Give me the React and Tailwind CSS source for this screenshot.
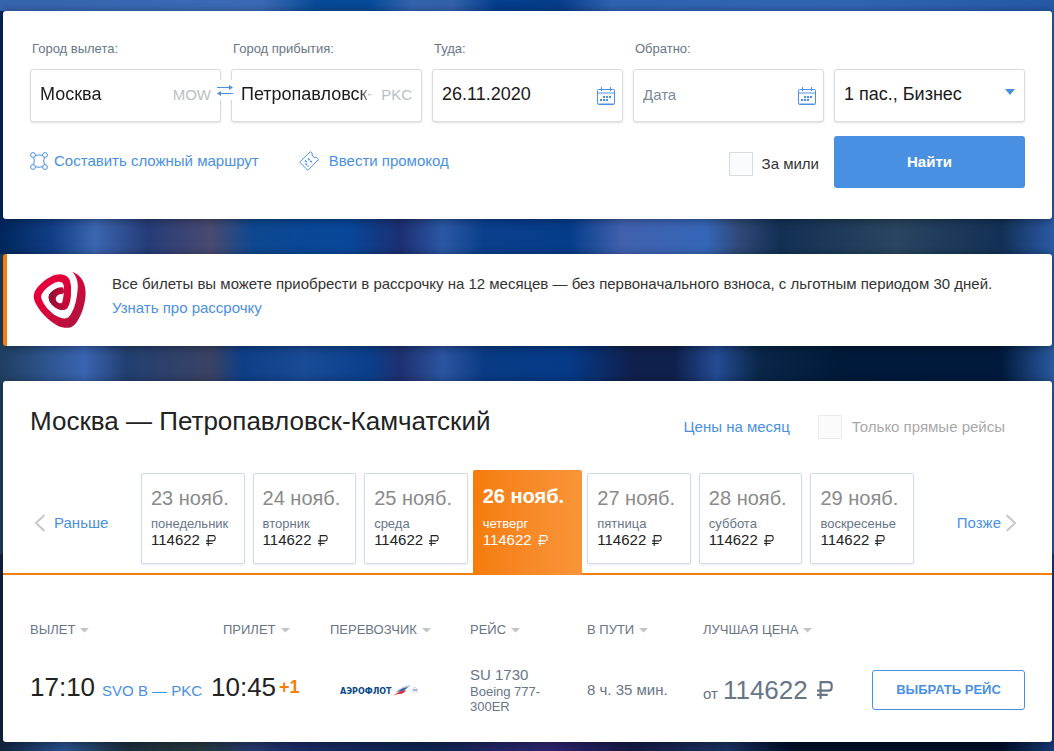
const days = [
  { date: '23 нояб.', day: 'понедельник' },
  { date: '24 нояб.', day: 'вторник' },
  { date: '25 нояб.', day: 'среда' },
  { date: '26 нояб.', day: 'четверг', active: true },
  { date: '27 нояб.', day: 'пятница' },
  { date: '28 нояб.', day: 'суббота' },
  { date: '29 нояб.', day: 'воскресенье' },
]

const columns = [
  { title: 'Вылет', width: 'w-[181px]' },
  { title: 'Прилет', width: 'w-[119px]', pad: 'pl-3' },
  { title: 'Перевозчик', width: 'w-[140px]' },
  { title: 'Рейс', width: 'w-[117px]' },
  { title: 'В пути', width: 'w-[116px]' },
  { title: 'Лучшая цена', width: 'w-[169px]' },
]

const fieldBox = 'flex h-[53px] items-center rounded-[3px] border border-[#d9dcdf] bg-white px-[9px] shadow-[0_1px_2px_rgba(0,0,0,0.12)]'
const fieldInput = 'h-full min-w-0 flex-1 bg-transparent pb-[3px] text-lg text-[#1a1a1a] outline-none placeholder:text-[15px] placeholder:text-[#7d8a99]'
const fieldLabel = 'mb-3 block px-[2px] text-[13px] leading-4 text-[#677587]'
const link = 'text-[15px] text-[#4a90e2]'

function CalendarIcon() {
  return (
    <svg aria-hidden="true" className="h-[18px] w-[18px]" fill="none" viewBox="0 0 18 18">
      <rect height="15" rx="1" stroke="#4a90e2" width="17" x="0.5" y="2.5" />
      <path d="M1 6h16" stroke="#a9cbf2" strokeWidth="2" />
      <path d="M1 16.5h16" stroke="#a9cbf2" />
      <path d="M4.5 0v4M13.5 0v4" stroke="#4a90e2" />
      <path d="M6 10h2M9 10h2M12 10h2M3 13h2M6 13h2M9 13h2" stroke="#4a90e2" strokeWidth="2" />
    </svg>
  )
}

function SwapIcon() {
  return (
    <svg aria-hidden="true" className="h-[11px] w-4" viewBox="0 0 16 11">
      <path d="M0 2.5h13M3 8.5h13" stroke="#4a90e2" />
      <path d="M12 0l4 2.5-4 2.5zM4 6L0 8.5 4 11z" fill="#4a90e2" />
    </svg>
  )
}

function RouteIcon() {
  return (
    <svg aria-hidden="true" className="h-[18px] w-[18px]" fill="none" stroke="#4a90e2" viewBox="0 0 18 18">
      <circle cx="3" cy="3" r="2.4" />
      <circle cx="15" cy="3" r="2.4" />
      <circle cx="3" cy="15" r="2.4" />
      <circle cx="15" cy="15" r="2.4" />
      <path d="M5.2 3.6q3.8-1.6 7.6 0M5.2 14.6q3.8 1.4 7.6 0M3.5 5.3q1.8 3.7 0 7.4M14.5 5.3q-1.8 3.7 0 7.4" />
    </svg>
  )
}

function TicketIcon() {
  return (
    <svg aria-hidden="true" className="h-5 w-5" fill="none" stroke="#4a90e2" strokeLinejoin="round" viewBox="0 0 20 20">
      <path d="M.7 11.2L11.2.7l2 1.5q-.6 2 .8 3.4t3.4.6l2 2.4L8.900 19.300z" />
      <path d="M6 9.500l2 2M9 7.500l4 4M6.500 12.500l3 3" strokeDasharray="2.200 1" strokeWidth="1.500" />
    </svg>
  )
}

function SpiralLogo() {
  return (
    <svg aria-hidden="true" className="h-[58px] w-[54px] shrink-0" fill="none" viewBox="100 64 162 174">
      <defs>
        <linearGradient id="spiral" x1="0" x2="1" y1="0" y2="1">
          <stop offset="0.3" stopColor="#e4003a" />
          <stop offset="1" stopColor="#a8183f" />
        </linearGradient>
        <linearGradient id="core" x1="1" x2="0" y1="0" y2="0">
          <stop offset="0" stopColor="#d4063a" />
          <stop offset="1" stopColor="#8c1234" />
        </linearGradient>
      </defs>
      <path d="M218 66C244 76 258 98 258 132C256 168 244 204 224 226C212 238 192 236 174 228C146 214 114 180 104 152C98 134 108 116 124 102C144 84 164 74 182 74C206 76 213 90 214 112C215 142 212 164 202 176C192 186 174 180 162 170C148 158 142 142 152 130C162 118 178 112 190 114C194 122 196 128 188 132C174 132 164 142 170 154C176 162 186 164 188 156C192 140 194 122 192 106C188 94 174 94 160 102C142 112 126 126 124 142C128 162 150 188 172 200C188 208 204 210 212 196C226 176 232 146 234 118C236 94 230 80 218 66Z" fill="url(#spiral)" />
      <path d="M190 114C178 112 162 118 152 130C142 142 148 158 162 170C174 180 192 186 202 176C206 168 210 158 212 142C204 150 194 164 180 162C168 160 162 146 172 138C178 132 188 134 191 130Z" fill="url(#core)" />
    </svg>
  )
}

function AeroflotLogo() {
  return (
    <svg aria-label="Аэрофлот" className="ml-[10px] h-4 w-20" role="img" viewBox="0 0 80 16">
      <text fill="#0b4a86" fontFamily="DejaVu Sans, sans-serif" fontSize="8" fontWeight="700" x="0" y="12">АЭРОФЛОТ</text>
      <path d="M55 11q6-7 16-8-5 5-9 6z" fill="#b9c3cf" />
      <path d="M57 10q5-4 11-5-3 3-6 4z" fill="#2457a8" />
      <path d="M53 14q6-5 13-6-2 4-7 4-3 0-6 2z" fill="#e0233c" />
      <circle cx="75" cy="8" fill="none" r="2.6" stroke="#a9b6cc" strokeDasharray="1 1" />
      <path d="M73 8h4" stroke="#4b6ea8" />
    </svg>
  )
}

function Ruble({ className, stroke }) {
  return (
    <svg aria-label="₽" className={className} fill="none" role="img" viewBox="0 0 18 20">
      <path d="M4 20V1.200h9q3.500 0 3.500 3.500v2.500q0 3.500-3.500 3.500H0M0 15.500h12" stroke="currentColor" strokeWidth={stroke} />
    </svg>
  )
}

function SortArrow() {
  return (
    <svg aria-hidden="true" className="h-[5px] w-[9px]" viewBox="0 0 9 5">
      <path d="M0 0h9L4.5 4.5z" fill="#c2c4c6" />
    </svg>
  )
}

function Airport({ id, label, value, code, children }) {
  return (
    <div className="relative">
      <label className={fieldLabel} htmlFor={id}>{label}</label>
      <div className={fieldBox}>
        <input className={`${fieldInput} [mask-image:linear-gradient(to_right,#000_90%,transparent)]`} defaultValue={value} id={id} type="text" />
        <span className="pl-2 text-[15px] text-[#b9bec6]">{code}</span>
      </div>
      {children}
    </div>
  )
}

function DateField({ id, label, value }) {
  return (
    <div>
      <label className={fieldLabel} htmlFor={id}>{label}</label>
      <div className={`${fieldBox} pr-[7px]`}>
        <input className={fieldInput} defaultValue={value} id={id} placeholder="Дата" type="text" />
        <button aria-label="Открыть календарь" type="button"><CalendarIcon /></button>
      </div>
    </div>
  )
}

function SearchForm() {
  return (
    <form className="rounded-[3px] bg-white px-[27px] pb-[31px] pt-[30px] shadow-[0_1px_10px_rgba(0,0,0,0.4)]" onSubmit={(e) => e.preventDefault()}>
      <div className="grid grid-cols-5 items-end gap-[10px]">
        <Airport code="MOW" id="from" label="Город вылета:" value="Москва">
          <button aria-label="Поменять города местами" className="absolute -right-3 bottom-[22px] z-10 flex h-5 items-center bg-white" type="button"><SwapIcon /></button>
        </Airport>
        <Airport code="PKC" id="to" label="Город прибытия:" value="Петропавловск-Камчатский" />
        <DateField id="there" label="Туда:" value="26.11.2020" />
        <DateField id="back" label="Обратно:" />
        <div className="relative">
          <select aria-label="Пассажиры и класс" className="block h-[53px] w-full appearance-none rounded-[3px] border border-[#d9dcdf] bg-white px-[9px] pb-[3px] text-lg text-[#1a1a1a] shadow-[0_1px_2px_rgba(0,0,0,0.12)]">
            <option>1 пас., Бизнес</option>
          </select>
          <svg aria-hidden="true" className="pointer-events-none absolute right-[10px] top-5 h-[6px] w-[10px]" viewBox="0 0 10 6"><path d="M0 0h10L5 6z" fill="#4a90e2" /></svg>
        </div>
      </div>
      <div className="mt-[14px] grid grid-cols-5 gap-[10px]">
        <div className="col-span-4 flex items-start">
          <a className={`flex items-center gap-[6px] pt-[14px] ${link}`} href="#route"><RouteIcon />Составить сложный маршрут</a>
          <a className={`ml-10 flex items-center gap-[10px] pt-[14px] ${link}`} href="#promo"><TicketIcon />Ввести промокод</a>
          <label className="ml-auto mr-[5px] mt-4 flex items-center gap-[9px] text-[15px] text-[#333]">
            <input className="h-6 w-6 appearance-none border border-[#d5dbe1] bg-[#f8fcff]" type="checkbox" />
            За мили
          </label>
        </div>
        <button className="h-[52px] rounded-[3px] bg-[#4a90e2] text-[15px] font-bold text-white" type="submit">Найти</button>
      </div>
    </form>
  )
}

function InstallmentBanner() {
  return (
    <section className="flex items-start gap-[25px] rounded-[3px] border-l-4 border-[#f57f0c] bg-white py-[17px] pl-[26px] pr-4 shadow-[0_1px_10px_rgba(0,0,0,0.4)]">
      <SpiralLogo />
      <p className="pt-px text-[15px] leading-6 text-[#333]">
        Все билеты вы можете приобрести в рассрочку на 12 месяцев — без первоначального взноса, с льготным периодом 30 дней.
        <br />
        <a className="text-[#4a90e2]" href="#installment">Узнать про рассрочку</a>
      </p>
    </section>
  )
}

function DayTab({ date, day, active }) {
  const box = active
    ? '-mx-[3px] -mb-[10px] -mt-[3px] rounded-t-[2px] bg-linear-to-r from-[#f57c0a] to-[#f99538] px-[10px] pt-[14px] text-white'
    : 'mb-px rounded-[2px] border border-[#d0dcea] bg-white px-[9px] pt-3 shadow-[0_1px_2px_rgba(0,0,0,0.08)]'
  return (
    <button className={`flex flex-col items-start whitespace-nowrap text-left ${box}`} type="button">
      <span className={active ? 'text-xl leading-6 font-bold' : 'text-xl leading-6 text-[#8a8a8a]'}>{date}</span>
      <span className={active ? 'mt-2 text-[13px] leading-4' : 'mt-[6px] text-[13px] leading-4 text-[#677587]'}>{day}</span>
      <span className={active ? 'flex items-center gap-[6px] text-[15px] leading-4' : 'flex items-center gap-[6px] text-[15px] leading-4 text-[#222]'}>
        114622 <Ruble className="h-[11px] w-[10px]" stroke="2" />
      </span>
    </button>
  )
}

function Results() {
  return (
    <section className="rounded-[3px] bg-white shadow-[0_1px_10px_rgba(0,0,0,0.4)]">
      <div className="flex items-start px-[27px] pt-6">
        <h1 className="text-[26px] leading-8 text-[#222]">Москва — Петропавловск-Камчатский</h1>
        <div className="ml-auto mr-5 mt-[10px] flex items-center">
          <a className={link} href="#month">Цены на месяц</a>
          <label className="ml-7 flex items-center gap-[10px] text-[15px] text-[#a9a9a9]">
            <input className="h-6 w-6 appearance-none border border-[#ebebeb] bg-[#fbfbfb]" disabled type="checkbox" />
            Только прямые рейсы
          </label>
        </div>
      </div>
      <nav aria-label="Даты вылета" className="mt-[34px] flex border-b-2 border-[#f57f0c] px-[27px] pb-2">
        <a className={`flex w-[111px] items-center gap-2 pl-1 pt-2 ${link}`} href="#earlier">
          <svg aria-hidden="true" className="h-[18px] w-3" fill="none" viewBox="0 0 12 18"><path d="M10.5 1L2 9l8.5 8" stroke="#c8c8c8" strokeWidth="2" /></svg>
          Раньше
        </a>
        <div className="grid h-[92px] flex-1 grid-cols-7 gap-2">
          {days.map((item) => <DayTab key={item.date} {...item} />)}
        </div>
        <a className={`flex w-[111px] items-center justify-end gap-1 pr-2 pt-2 ${link}`} href="#later">
          Позже
          <svg aria-hidden="true" className="h-[18px] w-3" fill="none" viewBox="0 0 12 18"><path d="M1.5 1L10 9l-8.5 8" stroke="#c8c8c8" strokeWidth="2" /></svg>
        </a>
      </nav>
      <div className="px-[27px] pb-[2px] pt-[45px]">
        <table className="w-full table-fixed text-left text-[#677587]">
          <thead>
            <tr>
              {columns.map(({ title, width, pad }) => (
                <th className={`${width} ${pad || ''} text-[13px] leading-5 font-normal whitespace-nowrap`} key={title}>
                  <button className="flex items-center gap-[5px] uppercase" type="button">{title}<SortArrow /></button>
                </th>
              ))}
              <th aria-label="Выбор" className="w-[153px]" />
            </tr>
          </thead>
          <tbody>
            <tr className="h-[100px]">
              <td className="pb-[6px] whitespace-nowrap text-[#222]">
                <div className="flex items-baseline gap-[7px]">
                  <span className="text-[26px]">17:10</span>
                  <a className={link} href="#segment">SVO B — PKC</a>
                </div>
              </td>
              <td className="pb-[6px] whitespace-nowrap text-[#222]">
                <div className="flex items-center gap-[3px]">
                  <span className="text-[26px]">10:45</span>
                  <span className="text-lg font-bold text-[#f57f0c]">+1</span>
                </div>
              </td>
              <td><AeroflotLogo /></td>
              <td>
                <div className="text-[15px] leading-[18px]">SU 1730</div>
                <div className="w-20 text-[13px] leading-[15px]">Boeing 777-300ER</div>
              </td>
              <td className="text-[15px]">8 ч. 35 мин.</td>
              <td className="whitespace-nowrap">
                <div className="flex items-baseline gap-[5px]">
                  <span className="text-[15px]">от</span>
                  <span className="text-[26px]">114622</span>
                  <Ruble className="ml-1 h-[18px] w-4" stroke="2.4" />
                </div>
              </td>
              <td>
                <button className="h-10 w-full rounded-[3px] border border-[#4a90e2] text-[13px] font-bold text-[#4a90e2] uppercase" type="button">Выбрать рейс</button>
              </td>
            </tr>
          </tbody>
        </table>
      </div>
    </section>
  )
}

// Night lights behind the panels: four rows of colour, one over the other.
const backdrop = [
  'bg-[linear-gradient(90deg,#3664ae,#3b6bb8_24%,#3a68b4_25%,#064b98_30%,#054a98_35%,#3463ae_39%,#3361ac_43%,#043f8e_47%,#063c88_53%,#3062b0_58%,#3165b4_80%,#2559a8),linear-gradient(90deg,#00265c,#123e86_5%,#3b66b0_9%,#253c78_14%,#4a4a70_20%,#0d4890_24%,#07479a_33%,#1c2f72_38%,#2b58a4_42%,#0a3f8c_46%,#053c8a_54%,#4161ae_59%,#3566b8_67%,#2f4a78_70%,#123054_74%,#2a4560_85%,#123056_95%,#2b5aa6),linear-gradient(90deg,#1f3f60,#3a64b2_8%,#223f70_12%,#3a4264_20%,#0e3f86_23%,#1a4a96_29%,#0a3f8c_35%,#1f3070_38%,#2b55a0_42%,#0a3a84_46%,#053a88_54%,#10204c_60%,#10204c_64%,#244c94_68%,#0a2648_72%,#001a3a_80%,#001a3c_95%,#2b5aa0),linear-gradient(90deg,#10243f,#28508c_6%,#1c2e3e_12%,#26383e_19%,#24386c_24%,#1a2a66_28%,#0e2450_40%,#2e2470_52%,#141a44_60%,#1a3060_69%,#000f28_75%,#000f28_95%,#183a78)]',
  'bg-[size:100%_11px,100%_243px,100%_300px,100%_100%] bg-no-repeat',
  'bg-[position:0_0,0_11px,0_254px,0_0]',
].join(' ')

export default function App() {
  return (
    <main className={`flex min-h-screen flex-col gap-[35px] pb-[9px] pl-[3px] pr-[2px] pt-[11px] font-['Liberation_Sans',Arial,sans-serif] ${backdrop}`}>
      <SearchForm />
      <InstallmentBanner />
      <Results />
    </main>
  )
}
